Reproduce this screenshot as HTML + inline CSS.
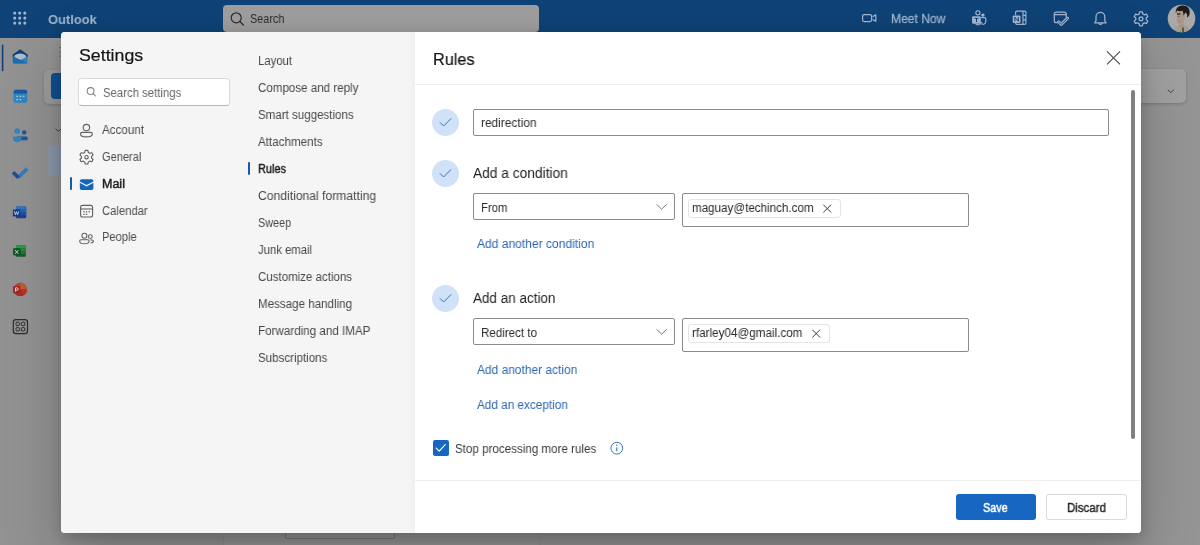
<!DOCTYPE html>
<html>
<head>
<meta charset="utf-8">
<title>Outlook Settings - Rules</title>
<style>
*{box-sizing:border-box;margin:0;padding:0}
html,body{width:1200px;height:545px;overflow:hidden}
body{font-family:"Liberation Sans",sans-serif;background:#959595;position:relative;color:#242424}
.abs{position:absolute}
.t{will-change:transform;position:absolute;display:block;white-space:nowrap;line-height:20px;height:20px;transform-origin:0 50%}
svg{position:absolute;overflow:visible}
#topbar{left:0;top:0;width:1200px;height:38.4px;background:#0f4276}
#hsearch{left:223px;top:5px;width:316px;height:27px;background:#9e9e9e;border-radius:4px}
#rail{left:0;top:38px;width:47px;height:507px;background:#929292}
#pane2{left:47px;top:38px;width:176px;height:507px;background:#949494}
#pane3{left:223px;top:38px;width:317px;height:507px;background:#969696;border-left:1px solid #8e8e8e;border-right:1px solid #8e8e8e}
#modal{left:61px;top:32px;width:1080px;height:501.4px;border-radius:4px;background:#fff;box-shadow:0 25.6px 57.6px rgba(0,0,0,.22),0 4.8px 14.4px rgba(0,0,0,.18)}
#colA{left:0;top:0;width:187px;height:501px;background:#f5f5f5;border-radius:4px 0 0 4px}
#colB{left:187px;top:0;width:167px;height:501px;background:linear-gradient(90deg,#f5f5f5 0,#f5f5f5 159px,#f0f0f0 167px)}
#colC{left:354px;top:0;width:726px;height:501px;background:#fff;border-radius:0 4px 4px 0}
.box{position:absolute;border:1px solid #8a8a8a;border-radius:2px;background:#fff}
.chip{position:absolute;border:1px solid #e4e4e4;border-radius:3px;background:#fff}
.circ{position:absolute;width:27px;height:27px;border-radius:50%;background:#cfe2f8}
</style>
</head>
<body>
<div id="rail" class="abs"></div>
<div id="pane2" class="abs"></div>
<div id="pane3" class="abs"></div>
<!-- background cards -->
<div class="abs" style="left:44px;top:70px;width:40px;height:34px;border-radius:5px;background:#9c9c9c;box-shadow:0 1px 3px rgba(0,0,0,.18)"></div>
<div class="abs" style="left:51px;top:73px;width:30px;height:26px;border-radius:4px;background:#134f93"></div>
<div class="abs" style="left:48px;top:145px;width:40px;height:31px;border-radius:4px;background:#8d99ab"></div>
<div class="abs" style="left:1120px;top:69px;width:66px;height:34px;border-radius:5px;background:#a1a1a1;box-shadow:0 1px 3px rgba(0,0,0,.2)"></div>
<div class="abs" style="left:285px;top:520px;width:110px;height:19px;border:1px solid #777;border-radius:2px"></div>
<div id="topbar" class="abs"></div>
<div id="hsearch" class="abs"></div>
<svg width="1200" height="545" viewBox="0 0 1200 545" style="left:0;top:0">
  <!-- waffle -->
  <g fill="#9db3cf">
    <circle cx="14.7" cy="13.1" r="1.55"/><circle cx="19.7" cy="13.1" r="1.55"/><circle cx="24.8" cy="13.1" r="1.55"/>
    <circle cx="14.7" cy="18.1" r="1.55"/><circle cx="19.7" cy="18.1" r="1.55"/><circle cx="24.8" cy="18.1" r="1.55"/>
    <circle cx="14.7" cy="23.1" r="1.55"/><circle cx="19.7" cy="23.1" r="1.55"/><circle cx="24.8" cy="23.1" r="1.55"/>
  </g>
  <!-- header search magnifier -->
  <g fill="none" stroke="#2c2c2c" stroke-width="1.2" stroke-linecap="round">
    <circle cx="236.2" cy="17.8" r="5"/><path d="M239.9 21.5 L243.4 25"/>
  </g>
  <!-- video icon -->
  <g fill="none" stroke="#a3b7d0" stroke-width="1.2" stroke-linejoin="round">
    <rect x="862.6" y="14.6" width="9" height="7" rx="1.5"/>
    <path d="M872.6 16.6 L875.8 14.9 V21.3 L872.6 19.6"/>
  </g>
  <!-- teams icon -->
  <g fill="none" stroke="#a3b7d0" stroke-width="1.15">
    <circle cx="977.9" cy="12.8" r="2.1"/>
    <path d="M981.2 17.6 H984.6 A1.2 1.2 0 0 1 985.8 18.8 V21.6 A2.7 2.7 0 0 1 981.6 23.8"/>
    <path d="M975.4 23.6 A3.6 3.6 0 0 0 981.6 22"/>
  </g>
  <circle cx="982.9" cy="15.1" r="1.7" fill="#a3b7d0"/>
  <rect x="972.1" y="16.3" width="8.7" height="7.5" rx="1.2" fill="#a3b7d0"/>
  <path d="M974.6 18.4 H978.4 M976.5 18.4 V22" stroke="#0f4276" stroke-width="1" fill="none"/>
  <!-- onenote icon -->
  <g fill="none" stroke="#a3b7d0" stroke-width="1.15" stroke-linejoin="round">
    <path d="M1015.6 15 V12.4 A1.3 1.3 0 0 1 1016.9 11.1 H1024.6 A1.3 1.3 0 0 1 1025.9 12.4 V23.1 A1.3 1.3 0 0 1 1024.6 24.4 H1016.9 A1.3 1.3 0 0 1 1015.6 23.1 V23"/>
    <path d="M1023 11.3 V24.2 M1023 15.4 H1025.9 M1023 19.8 H1025.9"/>
  </g>
  <rect x="1012.7" y="15.4" width="7.8" height="7.5" rx="1.2" fill="#a3b7d0"/>
  <path d="M1014.9 21.2 V17.2 L1018.3 21.2 V17.2" stroke="#0f4276" stroke-width="1" fill="none"/>
  <!-- my day icon -->
  <g fill="none" stroke="#a3b7d0" stroke-width="1.25" stroke-linejoin="round" stroke-linecap="round">
    <path d="M1058 22.7 H1056.3 A2 2 0 0 1 1054.3 20.7 V14 A2 2 0 0 1 1056.3 12 H1064.2 A2 2 0 0 1 1066.2 14 V17.2"/>
    <path d="M1054.5 14.6 H1066"/>
    <path d="M1058.6 21.8 L1061.2 24.4 L1067.6 18.2" stroke-width="3"/>
    <path d="M1058.6 21.8 L1061.2 24.4 L1067.6 18.2" stroke="#0f4276" stroke-width="0.9"/>
  </g>
  <!-- bell -->
  <g fill="none" stroke="#a3b7d0" stroke-width="1.25" stroke-linejoin="round" stroke-linecap="round">
    <path d="M1096 20.8 V16.8 A4.4 4.4 0 0 1 1104.8 16.8 V20.8 L1106.1 22.8 H1094.7 Z"/>
    <path d="M1098.8 23.3 A1.7 1.7 0 0 0 1102 23.3"/>
  </g>
  <!-- gear (topbar) -->
  <g transform="translate(1141 18.8)" fill="none" stroke="#a3b7d0" stroke-width="1.3" stroke-linejoin="round">
    <path id="gearp" d="M-1.3 -7 H1.3 L1.9 -4.8 L3.3 -4 L5.5 -4.6 L6.8 -2.3 L5.2 -0.8 V0.8 L6.8 2.3 L5.5 4.6 L3.3 4 L1.9 4.8 L1.3 7 H-1.3 L-1.9 4.8 L-3.3 4 L-5.5 4.6 L-6.8 2.3 L-5.2 0.8 V-0.8 L-6.8 -2.3 L-5.5 -4.6 L-3.3 -4 L-1.9 -4.8 Z"/>
    <circle r="1.9"/>
  </g>
  <!-- avatar -->
  <g>
    <clipPath id="avc"><circle cx="1181.5" cy="18.5" r="13.8"/></clipPath>
    <circle cx="1181.5" cy="18.5" r="13.8" fill="#a9a9a9"/>
    <g clip-path="url(#avc)">
      <path d="M1172.5 34 C1173.5 27.5 1177 25.4 1180.6 25 L1184.6 25 C1188 25.6 1190.4 28 1191 34 Z" fill="#a49f90"/>
      <path d="M1179 23.4 H1183.4 V27 L1181.2 28.6 L1179 27 Z" fill="#a8917f"/>
      <path d="M1182 28 L1183.6 27 L1184 33 H1182.4 Z" fill="#4a4a3a"/>
      <path d="M1179.4 30.4 L1181.4 30 L1181.2 33 H1179.2 Z" fill="#a8963c"/>
      <path d="M1176.6 12.4 C1176.8 9.6 1184.6 9 1184.8 13 L1184.6 19.6 C1184.2 22.6 1182.4 24.6 1180.6 24.6 C1178.6 24.6 1177 22.4 1176.6 19.4 Z" fill="#ad9787"/>
      <path d="M1175.8 13.2 C1175.2 8.4 1178.6 5.4 1182.6 5.6 C1187.4 5.4 1190.4 9 1189.6 13.6 C1189.4 15.6 1188.4 17.2 1187 17.4 C1187.6 15 1186.8 13 1185.4 12.4 C1184.6 13.6 1184 15 1183.6 15.8 C1183.4 13.6 1183.2 12 1182.6 10.8 C1180.6 11.4 1178.4 11.2 1177 10.6 C1176.6 11.4 1176.4 12.4 1175.8 13.2 Z" fill="#1f1b19"/>
      <path d="M1177 14 H1180.4" stroke="#3b312b" stroke-width="1.3" fill="none"/>
      <path d="M1177.6 16.4 H1179.4" stroke="#5a4a42" stroke-width="0.8" fill="none"/>
      <path d="M1178.4 21 Q1179.6 21.7 1180.8 21" stroke="#a07a78" stroke-width="0.9" fill="none"/>
    </g>
  </g>

  <!-- rail active bar -->
  <rect x="1.8" y="44.6" width="1.6" height="26.6" rx="0.8" fill="#123f7c"/>
  <!-- rail: mail -->
  <g>
    <path d="M13.4 55.2 L20.2 50.2 L27 55.2 V56.5 H13.4 Z" fill="none" stroke="#103f7c" stroke-width="1.5" stroke-linejoin="round"/>
    <path d="M13.4 55.5 L20.2 50.6 L27 55.5 V57 H13.4Z" fill="#103f7c"/>
    <path d="M14.4 55.4 Q20.2 51.6 26 55.4 V59.4 H14.4 Z" fill="#b2bcc7"/>
    <path d="M12.8 56.2 L20.2 60.2 L27.6 56.2 V62 A1.6 1.6 0 0 1 26 63.6 H14.4 A1.6 1.6 0 0 1 12.8 62 Z" fill="#2f86c4"/>
    <path d="M12.8 56.2 L27.4 63.2 A1.6 1.6 0 0 1 26 63.6 H14.4 A1.6 1.6 0 0 1 12.8 62 Z" fill="#1f6bb0"/>
  </g>
  <!-- rail: calendar -->
  <g>
    <rect x="13.6" y="89.8" width="13.6" height="13" rx="2.2" fill="#2d86c2"/>
    <path d="M13.6 93.6 V92 A2.2 2.2 0 0 1 15.8 89.8 H25 A2.2 2.2 0 0 1 27.2 92 V93.6 Z" fill="#1a5a9c"/>
    <g fill="#a9c4dc">
      <circle cx="17.2" cy="96.4" r="0.95"/><circle cx="20.4" cy="96.4" r="0.95"/><circle cx="23.6" cy="96.4" r="0.95"/>
      <circle cx="17.2" cy="99.6" r="0.95"/><circle cx="20.4" cy="99.6" r="0.95"/>
    </g>
  </g>
  <!-- rail: people -->
  <g>
    <circle cx="17.3" cy="131" r="2.8" fill="#3683bd"/>
    <circle cx="24.2" cy="132.4" r="2.2" fill="#145aa0"/>
    <rect x="16" y="136.5" width="11.9" height="3.7" rx="1.85" fill="#145aa0"/>
    <path d="M12.9 137.6 A1.1 1.1 0 0 1 14 136.5 H21.4 V138.4 A3.9 3.9 0 0 1 17.4 142.2 A4.4 4.4 0 0 1 12.9 138.2 Z" fill="#3683bd"/>
  </g>
  <!-- rail: todo check -->
  <g fill="none" stroke-width="3.6" stroke-linejoin="miter">
    <path d="M18.2 177.6 L27.2 168.4" stroke="#2f7cc4"/>
    <path d="M13 172.2 L18.6 177.8" stroke="#1b4e98"/>
  </g>
  <!-- rail: word -->
  <g>
    <rect x="16" y="206.6" width="10.2" height="11.6" rx="1" fill="#1a3f8f"/>
    <path d="M16 207.6 A1 1 0 0 1 17 206.6 H25.2 A1 1 0 0 1 26.2 207.6 V209.6 H16 Z" fill="#2f78c4"/>
    <rect x="16" y="209.6" width="10.2" height="2.9" fill="#2a62b4"/>
    <rect x="16" y="212.5" width="10.2" height="2.9" fill="#1f4ea2"/>
    <rect x="12.9" y="209.4" width="7.2" height="7.2" rx="0.8" fill="#173a86"/>
    <path d="M14.3 211.2 L15.4 214.8 L16.5 211.6 L17.6 214.8 L18.7 211.2" fill="none" stroke="#c9cfdc" stroke-width="0.9" stroke-linejoin="round"/>
  </g>
  <!-- rail: excel -->
  <g>
    <rect x="16" y="245.2" width="9.8" height="11.6" rx="1" fill="#155c2c"/>
    <path d="M16 246.2 A1 1 0 0 1 17 245.2 H24.8 A1 1 0 0 1 25.8 246.2 V248.4 H16 Z" fill="#2b9a4b"/>
    <rect x="16" y="248.4" width="4.9" height="2.8" fill="#1d7a3a"/><rect x="20.9" y="248.4" width="4.9" height="2.8" fill="#27883f"/>
    <rect x="16" y="251.2" width="4.9" height="2.8" fill="#135226"/><rect x="20.9" y="251.2" width="4.9" height="2.8" fill="#1d7a3a"/>
    <rect x="13.1" y="248.2" width="7.2" height="7.2" rx="0.8" fill="#0e5426"/>
    <path d="M15 250 L18.4 253.8 M18.4 250 L15 253.8" fill="none" stroke="#c9d6cc" stroke-width="1"/>
  </g>
  <!-- rail: powerpoint -->
  <g>
    <circle cx="20.2" cy="289.4" r="6.7" fill="#b8442b"/>
    <path d="M20.2 282.7 A6.7 6.7 0 0 1 26.9 289.4 H20.2 Z" fill="#c2582f"/>
    <path d="M26.9 289.4 A6.7 6.7 0 0 1 20.2 296.1 A6.7 6.7 0 0 1 14.2 292.4 L20.2 289.4 Z" fill="#a62c26"/>
    <path d="M26.9 289.4 A6.7 6.7 0 0 1 24 294.9 L20.2 289.4 Z" fill="#b8342a"/>
    <rect x="13" y="286" width="7.2" height="7.2" rx="0.8" fill="#a22822"/>
    <path d="M15.5 291.6 V287.8 H17 A1.2 1.2 0 0 1 17 290.2 H15.5" fill="none" stroke="#e3cfcc" stroke-width="0.95"/>
  </g>
  <!-- rail: apps -->
  <g fill="none" stroke="#2c2c2c" stroke-width="1.2">
    <rect x="13.3" y="319.6" width="14.2" height="14" rx="2.6"/>
    <rect x="16" y="322.2" width="3.4" height="3.4" rx="0.9" stroke-width="1"/>
    <rect x="21.4" y="322.2" width="3.4" height="3.4" rx="0.9" stroke-width="1"/>
    <rect x="16" y="327.6" width="3.4" height="3.4" rx="0.9" stroke-width="1"/>
    <rect x="21.4" y="327.6" width="3.4" height="3.4" rx="0.9" stroke-width="1"/>
  </g>
  <!-- misc behind-modal -->
  <path d="M59.4 47.5 H61.2 M59.4 52 H61.2 M59.4 56.3 H61.2" stroke="#606060" stroke-width="0.9" fill="none"/>
  <path d="M55.6 128.6 L58.4 131.4 L61.2 128.6" fill="none" stroke="#444" stroke-width="1"/>
  <path d="M1167.8 89.8 L1170.8 92.6 L1173.8 89.8" fill="none" stroke="#444" stroke-width="1"/>
</svg>

<div id="modal" class="abs">
  <div id="colA" class="abs"></div>
  <div id="colB" class="abs"></div>
  <div id="colC" class="abs"></div>
</div>
<!-- modal content in page coordinates -->
<div class="abs" style="left:78px;top:78px;width:152px;height:28px;background:#fff;border:1px solid #d9d9d9;border-bottom:1.5px solid #b5b5b5;border-radius:4px"></div>
<div class="abs" style="left:69.7px;top:176.6px;width:2.2px;height:13px;background:#1458b0;border-radius:1px"></div>
<div class="abs" style="left:248.3px;top:162px;width:2.2px;height:13px;background:#1458b0;border-radius:1px"></div>
<div class="abs" style="left:415px;top:84px;width:726px;height:1px;background:#efefef"></div>
<div class="abs" style="left:415px;top:480px;width:726px;height:1px;background:#efefef"></div>

<div class="circ" style="left:432px;top:109px"></div>
<div class="box" style="left:472.5px;top:109px;width:636px;height:26.5px"></div>
<div class="circ" style="left:432px;top:160px"></div>
<div class="box" style="left:472.5px;top:193px;width:202.5px;height:26.5px"></div>
<div class="box" style="left:682px;top:193px;width:286.5px;height:34px"></div>
<div class="chip" style="left:688px;top:198.6px;width:153.4px;height:19.3px"></div>
<div class="circ" style="left:432px;top:284.5px"></div>
<div class="box" style="left:472.5px;top:318px;width:202.5px;height:26.5px"></div>
<div class="box" style="left:682px;top:318px;width:286.5px;height:34px"></div>
<div class="chip" style="left:688px;top:323.6px;width:142.4px;height:19.3px"></div>
<div class="abs" style="left:432.5px;top:440px;width:16px;height:16px;background:#1767c2;border-radius:2px"></div>
<div class="abs" style="left:955.5px;top:494px;width:80px;height:26px;background:#1767c2;border-radius:3px"></div>
<div class="abs" style="left:1046px;top:494px;width:80.5px;height:26px;background:#fff;border:1px solid #dadada;border-radius:3px"></div>
<div class="abs" style="left:1130.9px;top:90.2px;width:4.5px;height:348.8px;background:#818181;border-radius:2.25px"></div>
<svg width="1200" height="545" viewBox="0 0 1200 545" style="left:0;top:0">
  <!-- search settings magnifier -->
  <g fill="none" stroke="#858585" stroke-width="1.05" stroke-linecap="round">
    <circle cx="90.6" cy="91" r="3.4"/><path d="M93.2 93.6 L95.6 96"/>
  </g>
  <!-- account -->
  <g fill="none" stroke="#616161" stroke-width="1.1">
    <circle cx="86.4" cy="127.6" r="3.2"/>
    <path d="M82 132.4 H90.8 A1.5 1.5 0 0 1 92.3 133.9 C92.3 135.8 90.2 136.9 86.4 136.9 C82.6 136.9 80.5 135.8 80.5 133.9 A1.5 1.5 0 0 1 82 132.4 Z"/>
  </g>
  <!-- gear general -->
  <g transform="translate(86.5 157.2)" fill="none" stroke="#616161" stroke-width="1.1" stroke-linejoin="round">
    <path d="M-1.3 -6.8 H1.3 L1.9 -4.7 L3.2 -3.9 L5.4 -4.5 L6.6 -2.3 L5.1 -0.8 V0.8 L6.6 2.3 L5.4 4.5 L3.2 3.9 L1.9 4.7 L1.3 6.8 H-1.3 L-1.9 4.7 L-3.2 3.9 L-5.4 4.5 L-6.6 2.3 L-5.1 0.8 V-0.8 L-6.6 -2.3 L-5.4 -4.5 L-3.2 -3.9 L-1.9 -4.7 Z"/>
    <circle r="1.7"/>
  </g>
  <!-- mail filled -->
  <g fill="#1366c0">
    <path d="M79.8 181 A1.8 1.8 0 0 1 81.6 179.2 H91.6 A1.8 1.8 0 0 1 93.4 181 V181.4 L86.6 185 L79.8 181.4 Z"/>
    <path d="M79.8 182.8 L86.6 186.4 L93.4 182.8 V188.2 A1.8 1.8 0 0 1 91.6 190 H81.6 A1.8 1.8 0 0 1 79.8 188.2 Z"/>
  </g>
  <!-- calendar -->
  <g fill="none" stroke="#616161" stroke-width="1.1">
    <rect x="80.6" y="205.4" width="12" height="11.6" rx="2"/>
    <path d="M80.6 209 H92.6"/>
  </g>
  <g fill="#616161">
    <circle cx="84" cy="211.7" r="0.8"/><circle cx="86.6" cy="211.7" r="0.8"/><circle cx="89.2" cy="211.7" r="0.8"/>
    <circle cx="84" cy="214.2" r="0.8"/><circle cx="86.6" cy="214.2" r="0.8"/>
  </g>
  <!-- people -->
  <g fill="none" stroke="#616161" stroke-width="1.05">
    <circle cx="84.4" cy="235.8" r="2.5"/>
    <circle cx="90.3" cy="236.6" r="1.9"/>
    <path d="M80.8 239.8 H88 A1.1 1.1 0 0 1 89.1 240.9 C89.1 242.7 87.4 243.7 84.4 243.7 C81.4 243.7 79.7 242.7 79.7 240.9 A1.1 1.1 0 0 1 80.8 239.8 Z"/>
    <path d="M90.4 240 H92.4 A1 1 0 0 1 93.4 241 C93.4 242.2 92.4 243 90.6 243"/>
  </g>
  <!-- close X -->
  <path d="M1107 51.4 L1120 64.4 M1120 51.4 L1107 64.4" stroke="#555" stroke-width="1.3" fill="none"/>
  <!-- step checks -->
  <g fill="none" stroke="#3f6fb5" stroke-width="1" stroke-linecap="round" stroke-linejoin="round">
    <path d="M440.2 122.6 L443.6 126 L450.8 118.8"/>
    <path d="M440.2 173.6 L443.6 177 L450.8 169.8"/>
    <path d="M440.2 298.6 L443.6 302 L450.8 294.8"/>
  </g>
  <!-- dropdown chevrons -->
  <g fill="none" stroke="#7a7a7a" stroke-width="1" stroke-linecap="round" stroke-linejoin="round">
    <path d="M656.8 204.6 L661.6 209.2 L666.4 204.6"/>
    <path d="M656.8 329.6 L661.6 334.2 L666.4 329.6"/>
  </g>
  <!-- chip X -->
  <g fill="none" stroke="#3a3a3a" stroke-width="1">
    <path d="M823.3 204.7 L831.1 212.5 M831.1 204.7 L823.3 212.5"/>
    <path d="M812.3 329.7 L820.1 337.5 M820.1 329.7 L812.3 337.5"/>
  </g>
  <!-- checkbox check -->
  <path d="M436.2 448.2 L439.2 451.2 L445.2 444.6" fill="none" stroke="#fff" stroke-width="1.2" stroke-linecap="round" stroke-linejoin="round"/>
  <!-- info icon -->
  <g>
    <circle cx="616.8" cy="448.2" r="5.9" fill="none" stroke="#3a74c0" stroke-width="1"/>
    <path d="M616.8 447.2 V451.2" stroke="#3a74c0" stroke-width="1.1"/>
    <circle cx="616.8" cy="445.3" r="0.7" fill="#3a74c0"/>
  </g>
</svg>

<span class="t" style="left:47.60px;top:10.00px;font-size:13.50px;font-weight:bold;color:#9fb3cc;transform:scaleX(0.9551);">Outlook</span>
<span class="t" style="left:249.60px;top:9.00px;font-size:12.50px;color:#2c2c2c;transform:scaleX(0.8661);">Search</span>
<span class="t" style="left:891.00px;top:9.00px;font-size:12.50px;color:#9bb0ca;transform:scaleX(0.9668);-webkit-text-stroke:0.3px #9bb0ca;">Meet Now</span>
<span class="t" style="left:78.70px;top:46.00px;font-size:17.00px;color:#141414;transform:scaleX(1.0452);-webkit-text-stroke:0.2px #141414;">Settings</span>
<span class="t" style="left:102.70px;top:83.00px;font-size:12.50px;color:#666;transform:scaleX(0.9077);">Search settings</span>
<span class="t" style="left:102.00px;top:120.00px;font-size:12.50px;color:#4c4c4c;transform:scaleX(0.9299);">Account</span>
<span class="t" style="left:102.00px;top:147.00px;font-size:12.50px;color:#4c4c4c;transform:scaleX(0.8838);">General</span>
<span class="t" style="left:102.00px;top:174.00px;font-size:12.50px;color:#1c1c1c;transform:scaleX(0.9861);-webkit-text-stroke:0.45px #1c1c1c;">Mail</span>
<span class="t" style="left:102.00px;top:201.00px;font-size:12.50px;color:#4c4c4c;transform:scaleX(0.9010);">Calendar</span>
<span class="t" style="left:102.00px;top:227.00px;font-size:12.50px;color:#4c4c4c;transform:scaleX(0.8890);">People</span>
<span class="t" style="left:258.40px;top:51.00px;font-size:12.50px;color:#484848;transform:scaleX(0.9060);">Layout</span>
<span class="t" style="left:258.40px;top:78.00px;font-size:12.50px;color:#484848;transform:scaleX(0.9263);">Compose and reply</span>
<span class="t" style="left:258.40px;top:105.00px;font-size:12.50px;color:#484848;transform:scaleX(0.9245);">Smart suggestions</span>
<span class="t" style="left:258.40px;top:132.00px;font-size:12.50px;color:#484848;transform:scaleX(0.9299);">Attachments</span>
<span class="t" style="left:258.40px;top:159.00px;font-size:12.50px;color:#1c1c1c;transform:scaleX(0.8762);-webkit-text-stroke:0.45px #1c1c1c;">Rules</span>
<span class="t" style="left:258.40px;top:186.00px;font-size:12.50px;color:#484848;transform:scaleX(0.9705);">Conditional formatting</span>
<span class="t" style="left:258.40px;top:213.00px;font-size:12.50px;color:#484848;transform:scaleX(0.8687);">Sweep</span>
<span class="t" style="left:258.40px;top:240.00px;font-size:12.50px;color:#484848;transform:scaleX(0.9039);">Junk email</span>
<span class="t" style="left:258.40px;top:267.00px;font-size:12.50px;color:#484848;transform:scaleX(0.9205);">Customize actions</span>
<span class="t" style="left:258.40px;top:294.00px;font-size:12.50px;color:#484848;transform:scaleX(0.9266);">Message handling</span>
<span class="t" style="left:258.40px;top:321.00px;font-size:12.50px;color:#484848;transform:scaleX(0.9299);">Forwarding and IMAP</span>
<span class="t" style="left:258.40px;top:348.00px;font-size:12.50px;color:#484848;transform:scaleX(0.9236);">Subscriptions</span>
<span class="t" style="left:433.30px;top:49.00px;font-size:16.50px;color:#141414;transform:scaleX(0.9838);-webkit-text-stroke:0.2px #141414;">Rules</span>
<span class="t" style="left:480.50px;top:113.00px;font-size:12.50px;color:#2a2a2a;transform:scaleX(0.9510);">redirection</span>
<span class="t" style="left:472.90px;top:163.00px;font-size:14.00px;color:#1f1f1f;transform:scaleX(0.9823);">Add a condition</span>
<span class="t" style="left:480.50px;top:198.00px;font-size:12.50px;color:#2a2a2a;transform:scaleX(0.9053);">From</span>
<span class="t" style="left:692.00px;top:198.00px;font-size:12.50px;color:#2a2a2a;transform:scaleX(0.9289);">maguay@techinch.com</span>
<span class="t" style="left:477.30px;top:234.00px;font-size:12.50px;color:#2c67b3;transform:scaleX(0.9637);">Add another condition</span>
<span class="t" style="left:472.90px;top:288.00px;font-size:14.00px;color:#1f1f1f;transform:scaleX(0.9636);">Add an action</span>
<span class="t" style="left:480.50px;top:323.00px;font-size:12.50px;color:#2a2a2a;transform:scaleX(0.9265);">Redirect to</span>
<span class="t" style="left:692.00px;top:323.00px;font-size:12.50px;color:#2a2a2a;transform:scaleX(0.9334);">rfarley04@gmail.com</span>
<span class="t" style="left:477.30px;top:360.00px;font-size:12.50px;color:#2c67b3;transform:scaleX(0.9559);">Add another action</span>
<span class="t" style="left:477.30px;top:395.00px;font-size:12.50px;color:#2c67b3;transform:scaleX(0.9400);">Add an exception</span>
<span class="t" style="left:455.40px;top:439.00px;font-size:12.50px;color:#3a3a3a;transform:scaleX(0.9281);">Stop processing more rules</span>
<span class="t" style="left:983.20px;top:498.00px;font-size:12.50px;color:#fff;transform:scaleX(0.8670);-webkit-text-stroke:0.5px #fff;">Save</span>
<span class="t" style="left:1067.00px;top:498.00px;font-size:12.50px;color:#242424;transform:scaleX(0.9181);-webkit-text-stroke:0.4px #242424;">Discard</span>
</body>
</html>
